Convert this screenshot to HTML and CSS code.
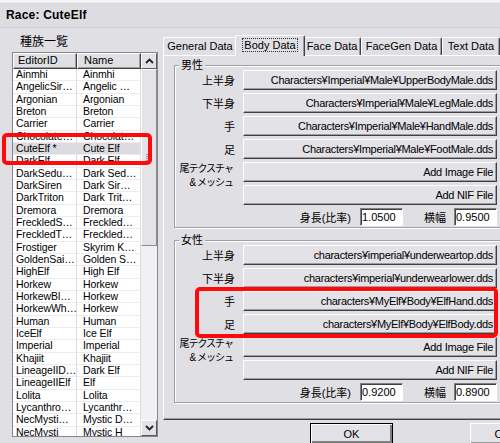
FILE: index.html
```html
<!DOCTYPE html>
<html lang="ja">
<head>
<meta charset="utf-8">
<title>Race: CuteElf</title>
<link rel="stylesheet" href="styles.css">
</head>
<body>
<div class="window">
  <div class="titlebar">Race: CuteElf</div>
  <div class="client">
    <div class="leftcol">
      <div class="listlabel">種族一覧</div>
      <div class="listbox">
        <div class="listmain">
          <div class="lhead"><div class="hcell c1">EditorID</div><div class="hcell c2">Name</div></div>
          <div class="rows">
            <div class="row"><div class="cell c1">Ainmhi</div><div class="cell c2">Ainmhi</div></div>
            <div class="row"><div class="cell c1">AngelicSir…</div><div class="cell c2">Angelic …</div></div>
            <div class="row"><div class="cell c1">Argonian</div><div class="cell c2">Argonian</div></div>
            <div class="row"><div class="cell c1">Breton</div><div class="cell c2">Breton</div></div>
            <div class="row"><div class="cell c1">Carrier</div><div class="cell c2">Carrier</div></div>
            <div class="row"><div class="cell c1">Chocolate…</div><div class="cell c2">Chocolat…</div></div>
            <div class="row sel"><div class="cell c1">CuteElf *</div><div class="cell c2">Cute Elf</div></div>
            <div class="row"><div class="cell c1">DarkElf</div><div class="cell c2">Dark Elf</div></div>
            <div class="row"><div class="cell c1">DarkSedu…</div><div class="cell c2">Dark Sed…</div></div>
            <div class="row"><div class="cell c1">DarkSiren</div><div class="cell c2">Dark Sir…</div></div>
            <div class="row"><div class="cell c1">DarkTriton</div><div class="cell c2">Dark Trit…</div></div>
            <div class="row"><div class="cell c1">Dremora</div><div class="cell c2">Dremora</div></div>
            <div class="row"><div class="cell c1">FreckledS…</div><div class="cell c2">Freckled…</div></div>
            <div class="row"><div class="cell c1">FreckledT…</div><div class="cell c2">Freckled…</div></div>
            <div class="row"><div class="cell c1">Frostiger</div><div class="cell c2">Skyrim K…</div></div>
            <div class="row"><div class="cell c1">GoldenSai…</div><div class="cell c2">Golden S…</div></div>
            <div class="row"><div class="cell c1">HighElf</div><div class="cell c2">High Elf</div></div>
            <div class="row"><div class="cell c1">Horkew</div><div class="cell c2">Horkew</div></div>
            <div class="row"><div class="cell c1">HorkewBl…</div><div class="cell c2">Horkew</div></div>
            <div class="row"><div class="cell c1">HorkewWh…</div><div class="cell c2">Horkew</div></div>
            <div class="row"><div class="cell c1">Human</div><div class="cell c2">Human</div></div>
            <div class="row"><div class="cell c1">IceElf</div><div class="cell c2">Ice Elf</div></div>
            <div class="row"><div class="cell c1">Imperial</div><div class="cell c2">Imperial</div></div>
            <div class="row"><div class="cell c1">Khajiit</div><div class="cell c2">Khajiit</div></div>
            <div class="row"><div class="cell c1">LineageIID…</div><div class="cell c2">Dark Elf</div></div>
            <div class="row"><div class="cell c1">LineageIIElf</div><div class="cell c2">Elf</div></div>
            <div class="row"><div class="cell c1">Lolita</div><div class="cell c2">Lolita</div></div>
            <div class="row"><div class="cell c1">Lycanthro…</div><div class="cell c2">Lycanthr…</div></div>
            <div class="row"><div class="cell c1">NecMysti…</div><div class="cell c2">Mystic D…</div></div>
            <div class="row"><div class="cell c1">NecMysti</div><div class="cell c2">Mystic H</div></div>
          </div>
        </div>
        <div class="vscroll">
          <div class="sbtn"><svg width="9" height="6" viewBox="0 0 9 6"><polyline points="1,5 4.5,1.5 8,5" fill="none" stroke="#222" stroke-width="1.8"/></svg></div>
          <div class="thumb"><div class="grip"></div></div>
          <div class="track"></div>
          <div class="sbtn"><svg width="9" height="6" viewBox="0 0 9 6"><polyline points="1,1 4.5,4.5 8,1" fill="none" stroke="#222" stroke-width="1.8"/></svg></div>
        </div>
      </div>
    </div>
    <div class="rightcol">
      <div class="tabs">
        <div class="tab t-general">General Data</div>
        <div class="tab t-body active"><span class="focus">Body Data</span></div>
        <div class="tab t-face">Face Data</div>
        <div class="tab t-facegen">FaceGen Data</div>
        <div class="tab t-text">Text Data</div>
      </div>
      <div class="tabpanel">
        <fieldset class="group">
          <legend class="legend">男性</legend>
          <div class="grid">
            <div class="lab">上半身</div><button class="btn">Characters¥Imperial¥Male¥UpperBodyMale.dds</button>
            <div class="lab">下半身</div><button class="btn">Characters¥Imperial¥Male¥LegMale.dds</button>
            <div class="lab">手</div><button class="btn">Characters¥Imperial¥Male¥HandMale.dds</button>
            <div class="lab">足</div><button class="btn">Characters¥Imperial¥Male¥FootMale.dds</button>
            <div class="lab tail">尾テクスチャ<br>&amp; メッシュ</div><button class="btn">Add Image File</button>
            <button class="btn">Add NIF File</button>
            <div class="sizerow"><span class="slab">身長(比率)</span><input class="num" value="1.0500"><span class="slab2">横幅</span><input class="num" value="0.9500"></div>
          </div>
        </fieldset>
        <fieldset class="group group2">
          <legend class="legend">女性</legend>
          <div class="grid">
            <div class="lab">上半身</div><button class="btn">characters¥imperial¥underweartop.dds</button>
            <div class="lab">下半身</div><button class="btn">characters¥imperial¥underwearlower.dds</button>
            <div class="lab">手</div><button class="btn">characters¥MyElf¥Body¥ElfHand.dds</button>
            <div class="lab">足</div><button class="btn">characters¥MyElf¥Body¥ElfBody.dds</button>
            <div class="lab tail">尾テクスチャ<br>&amp; メッシュ</div><button class="btn">Add Image File</button>
            <button class="btn">Add NIF File</button>
            <div class="sizerow"><span class="slab">身長(比率)</span><input class="num" value="0.9200"><span class="slab2">横幅</span><input class="num" value="0.8900"></div>
          </div>
        </fieldset>
      </div>
      <div class="dlgbtns">
        <button class="dbtn default">OK</button>
        <button class="dbtn">Cancel</button>
      </div>
    </div>
  </div>
  <div class="hl hl1"></div>
  <div class="hl hl2"></div>
</div>
</body>
</html>
```
FILE: styles.css
```css
* { box-sizing: border-box; }
html, body { margin: 0; padding: 0; }
body {
  width: 500px; height: 443px; overflow: hidden;
  font-family: "Liberation Sans", "Noto Sans CJK JP", sans-serif;
  font-size: 11px; color: #000; background: #e0dfe3;
}
.window { position: relative; width: 500px; height: 443px; overflow: hidden; background: #e0dfe3; }
.titlebar {
  height: 28px; padding: 8px 0 0 6px;
  font-size: 12px; font-weight: bold; line-height: 14px; letter-spacing: 0.2px;
  background: linear-gradient(#f6f6f8 0, #f6f6f8 2px, #dddce1 3px, #dddce1 100%);
  border-bottom: 1px solid #cfced4;
}
.client { display: flex; height: 415px; }
.leftcol { width: 163px; flex: none; padding-left: 12px; }
.listlabel { height: 24px; padding: 7px 0 0 8px; font-size: 12px; line-height: 14px; }
.listbox {
  width: 146px; height: 385px; display: flex;
  border: 1px solid #86858b; background: #fff;
}
.listmain { width: 128px; flex: none; overflow: hidden; }
.lhead { display: flex; height: 16px; }
.hcell {
  height: 16px; background: #e0dfe3; line-height: 13px; padding-left: 4px;
  border-top: 1px solid #fff; border-left: 1px solid #fff;
  border-right: 1px solid #404040; border-bottom: 1px solid #404040;
  box-shadow: inset -1px -1px #a09fa5;
}
.hcell.c2 { padding-left: 6px; }
.rows { height: 367px; overflow: hidden; }
.row { display: flex; height: 12.33px; }
.cell {
  height: 12.33px; line-height: 11px; overflow: hidden; white-space: nowrap;
  font-size: 10.5px; letter-spacing: -0.1px;
  padding-left: 3px; border-bottom: 1px solid #ececee; border-right: 1px solid #dcdcdf;
}
.c1 { width: 64px; flex: none; }
.c2 { width: 64px; flex: none; }
.cell.c2 { padding-left: 6px; }
.row.sel { background: #dcdbe0; }
.vscroll { width: 16px; flex: none; display: flex; flex-direction: column; background: #f1f0f3; }
.sbtn {
  height: 16px; flex: none; display: flex; align-items: center; justify-content: center;
  background: #e2e1e6;
  border-top: 1px solid #fff; border-left: 1px solid #fff;
  border-right: 1px solid #5a5a5e; border-bottom: 1px solid #5a5a5e;
}
.thumb {
  height: 177px; flex: none; background: #e4e3e8;
  border-top: 1px solid #fff; border-left: 1px solid #fff;
  border-right: 1px solid #8c8b91; border-bottom: 1px solid #8c8b91;
  display: flex; align-items: center; justify-content: center;
}
.grip { width: 6px; height: 7px; background: repeating-linear-gradient(#9a99a0 0, #9a99a0 1px, transparent 1px, transparent 2px); }
.track { flex: 1; }
.rightcol { width: 345px; flex: none; padding-top: 9px; }
.tabs { display: flex; height: 18px; align-items: flex-end; position: relative; z-index: 2; }
.tab {
  height: 18px; text-align: center; line-height: 16px; white-space: nowrap; flex: none;
  border-top: 1px solid #fff; border-left: 1px solid #fff; border-right: 1px solid #404040;
  box-shadow: inset -1px 0 #9c9ba1; border-radius: 2px 2px 0 0;
  background: #e0dfe3;
}
.t-general { width: 74px; }
.t-body { width: 70px; }
.t-face { width: 58px; }
.t-facegen { width: 81px; }
.t-text { width: 58px; }
.tab.active {
  height: 21px; margin: 0 -2px -1px -2px; line-height: 16px; padding-top: 1px;
  position: relative; z-index: 3;
}
.focus { border: 1px dotted #333; padding: 0 1px; }
.tabpanel {
  height: 365px; padding: 4px 3px 0 10px;
  border-top: 1px solid #fff; border-left: 1px solid #fff;
  border-right: 1px solid #404040; border-bottom: 1px solid #404040;
  box-shadow: inset -1px -1px #9c9ba1;
}
.group {
  margin: 0; padding: 0 6px 1px 0; min-width: 0;
  border: 1px solid #a09fa5; box-shadow: inset 1px 1px #fff, 1px 1px #fff;
}
.group2 { margin-top: 7px; }
.legend { padding: 0 2px; margin-left: 4px; line-height: 10px; font-size: 11px; background: #e0dfe3; }
.grid {
  display: grid; grid-template-columns: 61px 1fr; column-gap: 7px; row-gap: 3px;
  grid-template-rows: repeat(6, 20px) 18px;
}
.lab { align-self: center; text-align: right; padding-right: 1px; white-space: nowrap; font-size: 11px; }
.lab.tail { grid-row: span 2; align-self: start; line-height: 14px; font-size: 10px; letter-spacing: -1px; padding-top: 0; padding-right: 3px; }
.btn {
  grid-column: 2; height: 20px; margin: 0; padding: 0 3px 0 0;
  font-family: "Liberation Sans", "Noto Sans CJK JP", sans-serif; font-size: 11px; color: #000;
  letter-spacing: -0.3px;
  text-align: right; white-space: nowrap; overflow: hidden; line-height: 17px;
  background: #e3e2e7;
  border-top: 1px solid #fff; border-left: 1px solid #fff;
  border-right: 1px solid #404040; border-bottom: 1px solid #404040;
  box-shadow: inset -1px -1px #9d9ca2;
}
.sizerow { grid-column: 1 / -1; display: flex; justify-content: flex-end; align-items: center; height: 18px; }
.slab { margin-right: 9px; }
.slab2 { margin-left: 21px; margin-right: 8px; }
.num {
  width: 43px; height: 18px; margin: 0; padding: 0 0 0 1px;
  font-family: "Liberation Sans", sans-serif; font-size: 11px; color: #000; background: #fff;
  border-top: 1px solid #808080; border-left: 1px solid #808080;
  border-right: 1px solid #fff; border-bottom: 1px solid #fff;
  box-shadow: inset 1px 1px #404040;
}
.dlgbtns { display: flex; padding: 3px 0 0 147px; gap: 77px; }
.dbtn {
  width: 83px; height: 21px; flex: none; margin: 0; padding: 0;
  font-family: "Liberation Sans", sans-serif; font-size: 11px; color: #000;
  background: #e3e2e7;
  border-top: 1px solid #fff; border-left: 1px solid #fff;
  border-right: 1px solid #404040; border-bottom: 1px solid #404040;
  box-shadow: inset -1px -1px #9d9ca2;
}
.dbtn.default { border: 1px solid #000; box-shadow: inset 1px 1px #fff, inset -2px -2px #808080; }
.hl { position: absolute; border: 4px solid #ff0a0a; border-radius: 5px; }
.hl1 { left: 2px; top: 133px; width: 150px; height: 32px; }
.hl2 { left: 195px; top: 287px; width: 303px; height: 51px; }
```
